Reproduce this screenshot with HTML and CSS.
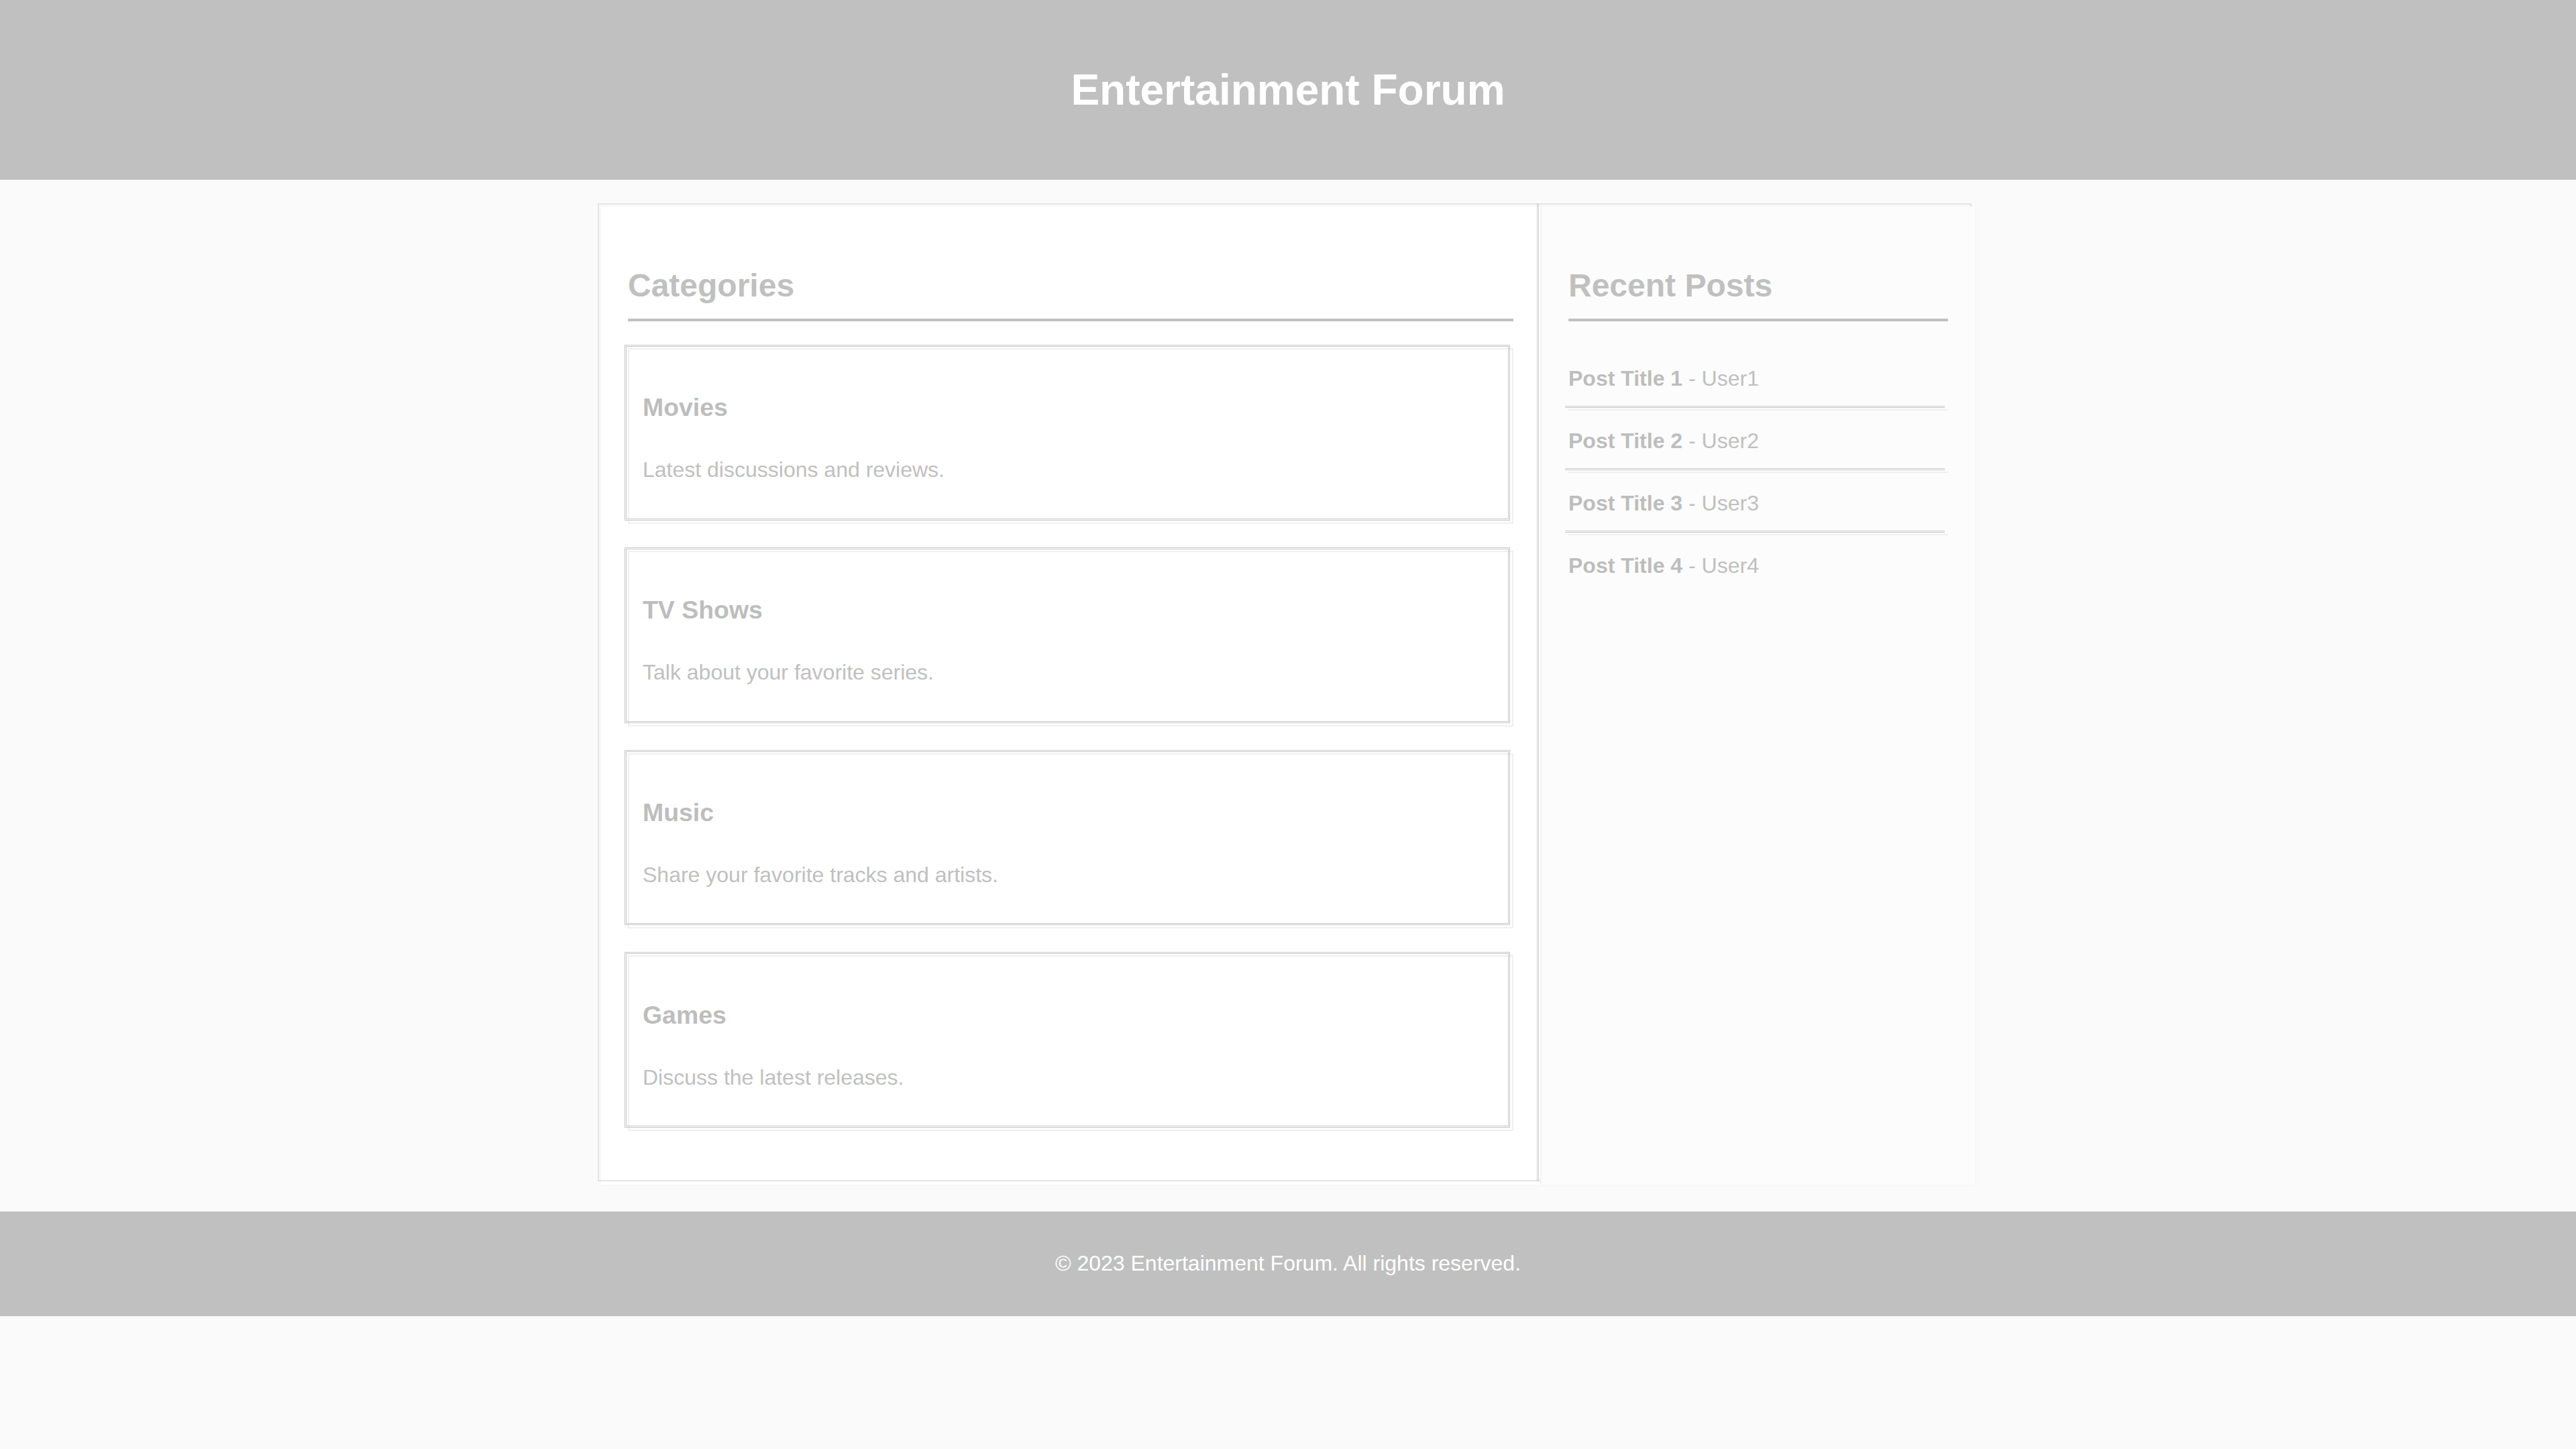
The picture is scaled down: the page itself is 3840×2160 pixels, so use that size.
FILE: index.html
```html
<!DOCTYPE html>
<html lang="en">
<head>
<meta charset="utf-8">
<title>Entertainment Forum</title>
<link rel="stylesheet" href="styles.css">
</head>
<body>
<header class="site-header">
  <h1 class="site-title">Entertainment Forum</h1>
</header>
<div class="container">
  <main class="main">
    <h2 class="section-title">Categories</h2>
    <div class="category">
      <h3 class="category-title">Movies</h3>
      <p class="category-desc">Latest discussions and reviews.</p>
    </div>
    <div class="category">
      <h3 class="category-title">TV Shows</h3>
      <p class="category-desc">Talk about your favorite series.</p>
    </div>
    <div class="category">
      <h3 class="category-title">Music</h3>
      <p class="category-desc">Share your favorite tracks and artists.</p>
    </div>
    <div class="category">
      <h3 class="category-title">Games</h3>
      <p class="category-desc">Discuss the latest releases.</p>
    </div>
  </main>
  <aside class="sidebar">
    <h2 class="section-title">Recent Posts</h2>
    <ul class="post-list">
      <li class="post-item"><strong class="post-title">Post Title 1</strong> - User1</li>
      <li class="post-item"><strong class="post-title">Post Title 2</strong> - User2</li>
      <li class="post-item"><strong class="post-title">Post Title 3</strong> - User3</li>
      <li class="post-item"><strong class="post-title">Post Title 4</strong> - User4</li>
    </ul>
  </aside>
</div>
<footer class="site-footer">
  <p class="footer-text">&copy; 2023 Entertainment Forum. All rights reserved.</p>
</footer>
</body>
</html>
```
FILE: styles.css
```css
html {
  background: #fafafa;
}

body {
  margin: 0;
  background: #fafafa;
  font-family: "Liberation Sans", Arial, Helvetica, sans-serif;
  font-size: 32px;
  line-height: 1.6;
  color: #c0c0c0;
}

.site-header {
  background: #c0c0c0;
  color: #ffffff;
  text-align: center;
  padding: 40px 0;
}

.site-title {
  margin: 42.88px 0;
  font-size: 64px;
  font-weight: bold;
}

.container {
  position: relative;
  width: 2048px;
  margin: 40px auto;
  display: flex;
  background: #ffffff;
  box-shadow: 0 0 6px rgba(0, 0, 0, 0.03);
}

/* faint offset outline drawn over the container edge */
.container::before {
  content: "";
  position: absolute;
  top: -5px;
  left: -5px;
  right: 5px;
  bottom: 5px;
  border: 2px solid #e4e4e4;
  pointer-events: none;
}

.main {
  box-sizing: border-box;
  width: 1400px;
  flex: none;
  padding: 40px;
  background: #ffffff;
}

.sidebar {
  position: relative;
  flex: 1;
  box-sizing: border-box;
  padding: 40px;
  background: #fcfcfc;
  border-left: 2px solid #f2f2f2;
}

.sidebar::before {
  content: "";
  position: absolute;
  top: -5px;
  bottom: 5px;
  left: -7px;
  width: 0;
  border-left: 3px double #cdcdcd;
  pointer-events: none;
}

.section-title {
  margin: 39.84px 0;
  font-size: 48px;
  font-weight: bold;
  padding-bottom: 10px;
  border-bottom: 4px solid #c0c0c0;
  color: #c0c0c0;
}

.category {
  position: relative;
  border: 2px solid #f0f0f0;
  padding: 20px;
  margin-bottom: 40px;
  background: #ffffff;
}

.category::before {
  content: "";
  position: absolute;
  top: -7px;
  left: -7px;
  right: 3px;
  bottom: 3px;
  border: 3px double #c6c6c6;
  pointer-events: none;
}

.category-title {
  margin: 37.44px 0;
  font-size: 37.44px;
  font-weight: bold;
  color: #bdbdbd;
}

.category-desc {
  margin: 32px 0;
  color: #c0c0c0;
}

.post-list {
  list-style: none;
  margin: 0;
  padding: 0;
}

.post-item {
  position: relative;
  padding: 20px 0;
  border-bottom: 2px solid #f0f0f0;
  color: #c0c0c0;
}

.post-item::after {
  content: "";
  position: absolute;
  left: -5px;
  right: 5px;
  bottom: 2px;
  height: 0;
  border-bottom: 3px double #c8c8c8;
  pointer-events: none;
}

.post-item:last-child {
  border-bottom: none;
}

.post-item:last-child::after {
  display: none;
}

.post-title {
  color: #bdbdbd;
}

.site-footer {
  background: #c0c0c0;
  color: #ffffff;
  text-align: center;
  padding: 20px;
}

.footer-text {
  margin: 32px 0;
}
```
